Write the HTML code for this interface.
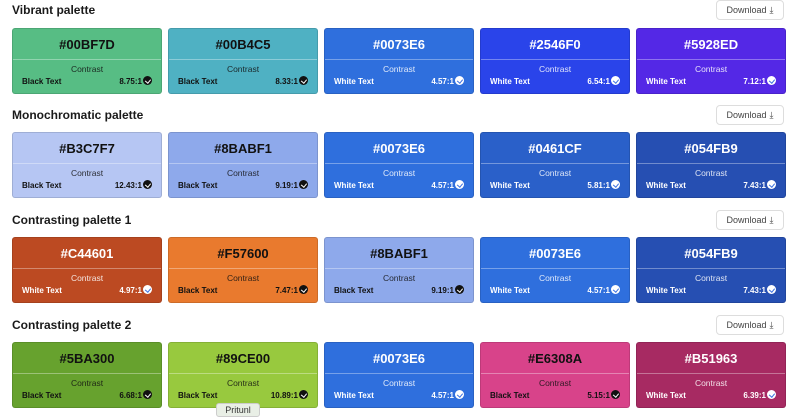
<!DOCTYPE html>
<html><head><style>
*{box-sizing:border-box;margin:0;padding:0}
body{width:800px;height:414px;background:#fff;font-family:"Liberation Sans",sans-serif;position:relative;overflow:hidden}
.t{position:absolute;left:12px;font-size:12px;font-weight:bold;color:#1a1a1a}
.dl{position:absolute;left:716px;width:68px;height:20px;border:1px solid #ddd;border-radius:4px;font-size:9px;color:#444;display:flex;align-items:center;justify-content:center;gap:3px;background:#fff}
.c{position:absolute;width:150px;height:66px;border-radius:3px;border:1px solid rgba(0,0,0,.12)}
.c .h{height:31px;display:flex;align-items:center;justify-content:center;font-size:13px;font-weight:bold;border-bottom:1px solid rgba(255,255,255,.35)}
.c .k{text-align:center;font-size:8.5px;margin-top:4px;opacity:.85}
.c .r{display:flex;justify-content:space-between;align-items:center;font-size:8px;font-weight:bold;padding:0 9px;margin-top:2px}
.b{color:#111}.w{color:#fff}
.ic{display:inline-block;width:9px;height:9px;border-radius:50%;vertical-align:-1px;margin-left:1px;position:relative}
.b .ic{background:#111}.w .ic{background:#fff}
.ic::after{content:"";position:absolute;left:2.5px;top:1.5px;width:2.5px;height:4px;border:solid;border-width:0 1.2px 1.2px 0;transform:rotate(40deg)}
.b .ic::after{border-color:#fff}.w .ic::after{border-color:#3a6fe0}
.tip{position:absolute;left:216px;top:403px;width:44px;height:14px;background:#e9efe6;border:1px solid #ccc;border-radius:3px;font-size:9px;text-align:center;color:#333;padding-top:1px}
</style></head><body>
<div class="t" style="top:3px">Vibrant palette</div>
<div class="dl" style="top:0">Download <span>⤓</span></div>
<div class="t" style="top:108px">Monochromatic palette</div>
<div class="dl" style="top:105px">Download <span>⤓</span></div>
<div class="t" style="top:213px">Contrasting palette 1</div>
<div class="dl" style="top:210px">Download <span>⤓</span></div>
<div class="t" style="top:318px">Contrasting palette 2</div>
<div class="dl" style="top:315px">Download <span>⤓</span></div>

<div class="c b" style="left:12px;top:28px;background:#57bd84"><div class="h">#00BF7D</div><div class="k">Contrast</div><div class="r"><span>Black Text</span><span>8.75:1<i class="ic"></i></span></div></div>
<div class="c b" style="left:168px;top:28px;background:#4fb1c3"><div class="h">#00B4C5</div><div class="k">Contrast</div><div class="r"><span>Black Text</span><span>8.33:1<i class="ic"></i></span></div></div>
<div class="c w" style="left:324px;top:28px;background:#2f6fdd"><div class="h">#0073E6</div><div class="k">Contrast</div><div class="r"><span>White Text</span><span>4.57:1<i class="ic"></i></span></div></div>
<div class="c w" style="left:480px;top:28px;background:#2a44ea"><div class="h">#2546F0</div><div class="k">Contrast</div><div class="r"><span>White Text</span><span>6.54:1<i class="ic"></i></span></div></div>
<div class="c w" style="left:636px;top:28px;background:#5428e6"><div class="h">#5928ED</div><div class="k">Contrast</div><div class="r"><span>White Text</span><span>7.12:1<i class="ic"></i></span></div></div>

<div class="c b" style="left:12px;top:132px;background:#b6c6f3"><div class="h">#B3C7F7</div><div class="k">Contrast</div><div class="r"><span>Black Text</span><span>12.43:1<i class="ic"></i></span></div></div>
<div class="c b" style="left:168px;top:132px;background:#8ea9eb"><div class="h">#8BABF1</div><div class="k">Contrast</div><div class="r"><span>Black Text</span><span>9.19:1<i class="ic"></i></span></div></div>
<div class="c w" style="left:324px;top:132px;background:#2f6fdd"><div class="h">#0073E6</div><div class="k">Contrast</div><div class="r"><span>White Text</span><span>4.57:1<i class="ic"></i></span></div></div>
<div class="c w" style="left:480px;top:132px;background:#2a60c9"><div class="h">#0461CF</div><div class="k">Contrast</div><div class="r"><span>White Text</span><span>5.81:1<i class="ic"></i></span></div></div>
<div class="c w" style="left:636px;top:132px;background:#264fb2"><div class="h">#054FB9</div><div class="k">Contrast</div><div class="r"><span>White Text</span><span>7.43:1<i class="ic"></i></span></div></div>

<div class="c w" style="left:12px;top:237px;background:#bc4a22"><div class="h">#C44601</div><div class="k">Contrast</div><div class="r"><span>White Text</span><span>4.97:1<i class="ic"></i></span></div></div>
<div class="c b" style="left:168px;top:237px;background:#e97a2e"><div class="h">#F57600</div><div class="k">Contrast</div><div class="r"><span>Black Text</span><span>7.47:1<i class="ic"></i></span></div></div>
<div class="c b" style="left:324px;top:237px;background:#8ea9eb"><div class="h">#8BABF1</div><div class="k">Contrast</div><div class="r"><span>Black Text</span><span>9.19:1<i class="ic"></i></span></div></div>
<div class="c w" style="left:480px;top:237px;background:#2f6fdd"><div class="h">#0073E6</div><div class="k">Contrast</div><div class="r"><span>White Text</span><span>4.57:1<i class="ic"></i></span></div></div>
<div class="c w" style="left:636px;top:237px;background:#264fb2"><div class="h">#054FB9</div><div class="k">Contrast</div><div class="r"><span>White Text</span><span>7.43:1<i class="ic"></i></span></div></div>

<div class="c b" style="left:12px;top:342px;background:#67a22e"><div class="h">#5BA300</div><div class="k">Contrast</div><div class="r"><span>Black Text</span><span>6.68:1<i class="ic"></i></span></div></div>
<div class="c b" style="left:168px;top:342px;background:#98c93e"><div class="h">#89CE00</div><div class="k">Contrast</div><div class="r"><span>Black Text</span><span>10.89:1<i class="ic"></i></span></div></div>
<div class="c w" style="left:324px;top:342px;background:#2f6fdd"><div class="h">#0073E6</div><div class="k">Contrast</div><div class="r"><span>White Text</span><span>4.57:1<i class="ic"></i></span></div></div>
<div class="c b" style="left:480px;top:342px;background:#d8438a"><div class="h">#E6308A</div><div class="k">Contrast</div><div class="r"><span>Black Text</span><span>5.15:1<i class="ic"></i></span></div></div>
<div class="c w" style="left:636px;top:342px;background:#a72a62"><div class="h">#B51963</div><div class="k">Contrast</div><div class="r"><span>White Text</span><span>6.39:1<i class="ic"></i></span></div></div>
<div class="tip">Pritunl</div>
</body></html>
